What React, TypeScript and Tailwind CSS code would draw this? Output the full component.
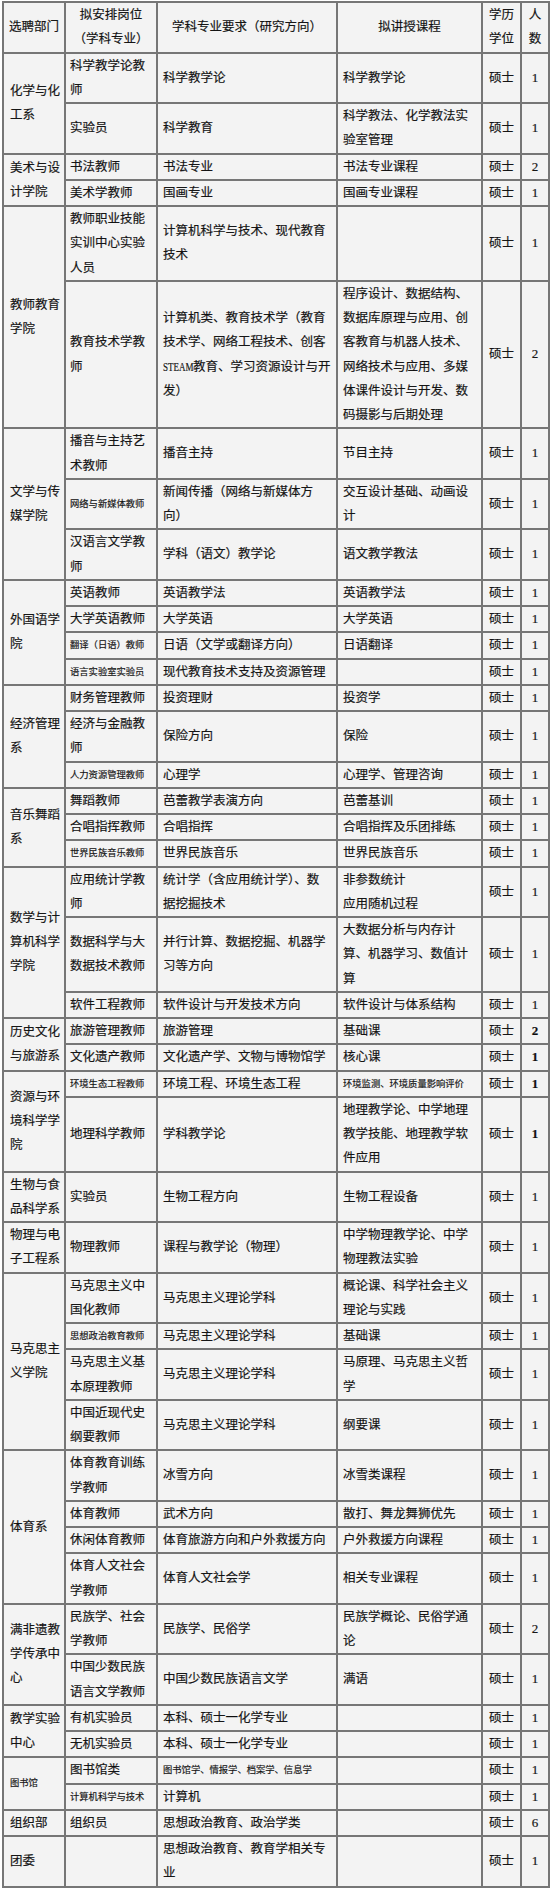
import React from "react";

type Row = {
  pos: string;
  posSm?: boolean;
  major: string;
  majorSm?: boolean;
  course: string;
  courseSm?: boolean;
  n: string;
  bold?: boolean;
};

type Dept = { name: string; nameSm?: boolean; rows: Row[] };

const DEPTS: Dept[] = [
  {
    name: "化学与化\n工系",
    rows: [
      { pos: "科学教学论教\n师", major: "科学教学论", course: "科学教学论", n: "1" },
      { pos: "实验员", major: "科学教育", course: "科学教法、化学教法实\n验室管理", n: "1" },
    ],
  },
  {
    name: "美术与设\n计学院",
    rows: [
      { pos: "书法教师", major: "书法专业", course: "书法专业课程", n: "2" },
      { pos: "美术学教师", major: "国画专业", course: "国画专业课程", n: "1" },
    ],
  },
  {
    name: "教师教育\n学院",
    rows: [
      { pos: "教师职业技能\n实训中心实验\n人员", major: "计算机科学与技术、现代教育\n技术", course: "", n: "1" },
      {
        pos: "教育技术学教\n师",
        major: "计算机类、教育技术学（教育\n技术学、网络工程技术、创客\n@STEAM教育、学习资源设计与开\n发）",
        course: "程序设计、数据结构、\n数据库原理与应用、创\n客教育与机器人技术、\n网络技术与应用、多媒\n体课件设计与开发、数\n码摄影与后期处理",
        n: "2",
      },
    ],
  },
  {
    name: "文学与传\n媒学院",
    rows: [
      { pos: "播音与主持艺\n术教师", major: "播音主持", course: "节目主持", n: "1" },
      { pos: "网络与新媒体教师", posSm: true, major: "新闻传播（网络与新媒体方\n向）", course: "交互设计基础、动画设\n计", n: "1" },
      { pos: "汉语言文学教\n师", major: "学科（语文）教学论", course: "语文教学教法", n: "1" },
    ],
  },
  {
    name: "外国语学\n院",
    rows: [
      { pos: "英语教师", major: "英语教学法", course: "英语教学法", n: "1" },
      { pos: "大学英语教师", major: "大学英语", course: "大学英语", n: "1" },
      { pos: "翻译（日语）教师", posSm: true, major: "日语（文学或翻译方向）", course: "日语翻译", n: "1" },
      { pos: "语言实验室实验员", posSm: true, major: "现代教育技术支持及资源管理", course: "", n: "1" },
    ],
  },
  {
    name: "经济管理\n系",
    rows: [
      { pos: "财务管理教师", major: "投资理财", course: "投资学", n: "1" },
      { pos: "经济与金融教\n师", major: "保险方向", course: "保险", n: "1" },
      { pos: "人力资源管理教师", posSm: true, major: "心理学", course: "心理学、管理咨询", n: "1" },
    ],
  },
  {
    name: "音乐舞蹈\n系",
    rows: [
      { pos: "舞蹈教师", major: "芭蕾教学表演方向", course: "芭蕾基训", n: "1" },
      { pos: "合唱指挥教师", major: "合唱指挥", course: "合唱指挥及乐团排练", n: "1" },
      { pos: "世界民族音乐教师", posSm: true, major: "世界民族音乐", course: "世界民族音乐", n: "1" },
    ],
  },
  {
    name: "数学与计\n算机科学\n学院",
    rows: [
      { pos: "应用统计学教\n师", major: "统计学（含应用统计学）、数\n据挖掘技术", course: "非参数统计\n应用随机过程", n: "1" },
      { pos: "数据科学与大\n数据技术教师", major: "并行计算、数据挖掘、机器学\n习等方向", course: "大数据分析与内存计\n算、机器学习、数值计\n算", n: "1" },
      { pos: "软件工程教师", major: "软件设计与开发技术方向", course: "软件设计与体系结构", n: "1" },
    ],
  },
  {
    name: "历史文化\n与旅游系",
    rows: [
      { pos: "旅游管理教师", major: "旅游管理", course: "基础课", n: "2", bold: true },
      { pos: "文化遗产教师", major: "文化遗产学、文物与博物馆学", course: "核心课", n: "1", bold: true },
    ],
  },
  {
    name: "资源与环\n境科学学\n院",
    rows: [
      { pos: "环境生态工程教师", posSm: true, major: "环境工程、环境生态工程", course: "环境监测、环境质量影响评价", courseSm: true, n: "1", bold: true },
      { pos: "地理科学教师", major: "学科教学论", course: "地理教学论、中学地理\n教学技能、地理教学软\n件应用", n: "1", bold: true },
    ],
  },
  {
    name: "生物与食\n品科学系",
    rows: [{ pos: "实验员", major: "生物工程方向", course: "生物工程设备", n: "1" }],
  },
  {
    name: "物理与电\n子工程系",
    rows: [{ pos: "物理教师", major: "课程与教学论（物理）", course: "中学物理教学论、中学\n物理教法实验", n: "1" }],
  },
  {
    name: "马克思主\n义学院",
    rows: [
      { pos: "马克思主义中\n国化教师", major: "马克思主义理论学科", course: "概论课、科学社会主义\n理论与实践", n: "1" },
      { pos: "思想政治教育教师", posSm: true, major: "马克思主义理论学科", course: "基础课", n: "1" },
      { pos: "马克思主义基\n本原理教师", major: "马克思主义理论学科", course: "马原理、马克思主义哲\n学", n: "1" },
      { pos: "中国近现代史\n纲要教师", major: "马克思主义理论学科", course: "纲要课", n: "1" },
    ],
  },
  {
    name: "体育系",
    rows: [
      { pos: "体育教育训练\n学教师", major: "冰雪方向", course: "冰雪类课程", n: "1" },
      { pos: "体育教师", major: "武术方向", course: "散打、舞龙舞狮优先", n: "1" },
      { pos: "休闲体育教师", major: "体育旅游方向和户外救援方向", course: "户外救援方向课程", n: "1" },
      { pos: "体育人文社会\n学教师", major: "体育人文社会学", course: "相关专业课程", n: "1" },
    ],
  },
  {
    name: "满非遗教\n学传承中\n心",
    rows: [
      { pos: "民族学、社会\n学教师", major: "民族学、民俗学", course: "民族学概论、民俗学通\n论", n: "2" },
      { pos: "中国少数民族\n语言文学教师", major: "中国少数民族语言文学", course: "满语", n: "1" },
    ],
  },
  {
    name: "教学实验\n中心",
    rows: [
      { pos: "有机实验员", major: "本科、硕士一化学专业", course: "", n: "1" },
      { pos: "无机实验员", major: "本科、硕士一化学专业", course: "", n: "1" },
    ],
  },
  {
    name: "图书馆",
    nameSm: true,
    rows: [
      { pos: "图书馆类", major: "图书馆学、情报学、档案学、信息学", majorSm: true, course: "", n: "1" },
      { pos: "计算机科学与技术", posSm: true, major: "计算机", course: "", n: "1" },
    ],
  },
  {
    name: "组织部",
    rows: [{ pos: "组织员", major: "思想政治教育、政治学类", course: "", n: "6" }],
  },
  {
    name: "团委",
    rows: [{ pos: "", major: "思想政治教育、教育学相关专\n业", course: "", n: "1" }],
  },
];

// a line starting with "@STEAM" gets the narrow Latin word the scan shows
function Lines({ text }: { text: string }) {
  const parts = text.split("\n");
  return (
    <>
      {parts.map((p, i) => (
        <React.Fragment key={i}>
          {i > 0 && <br />}
          {p.startsWith("@STEAM") ? (
            <>
              <span className="inline-block w-[30px] overflow-visible align-top">
                <span className="inline-block origin-left scale-x-[0.72]">STEAM</span>
              </span>
              {p.slice(6)}
            </>
          ) : (
            p
          )}
        </React.Fragment>
      ))}
    </>
  );
}

const cell = "border-2 border-[#767676] align-middle whitespace-nowrap leading-[24.25px] p-0";
const big = "text-[12.5px]";
const small = "text-[9.3px]";

export default function App() {
  return (
    <div className="w-[550px] min-h-[1891px] bg-white pt-[1px] pl-[2px] text-[#0d0d0d] [-webkit-text-stroke:0.2px_#333] font-['Liberation_Serif','Noto_Sans_CJK_SC',serif]">
      <table className="w-[546px] table-fixed border-collapse bg-[#f3f3f3]">
        <colgroup>
          <col className="w-[62px]" />
          <col className="w-[92px]" />
          <col className="w-[180px]" />
          <col className="w-[145px]" />
          <col className="w-[39px]" />
          <col className="w-[28px]" />
        </colgroup>
        <thead>
          <tr>
            <th className={`${cell} ${big} font-normal text-center`}>选聘部门</th>
            <th className={`${cell} ${big} font-normal text-center`}>
              拟安排岗位
              <br />
              （学科专业）
            </th>
            <th className={`${cell} ${big} font-normal text-center`}>学科专业要求（研究方向）</th>
            <th className={`${cell} ${big} font-normal text-center`}>拟讲授课程</th>
            <th className={`${cell} ${big} font-normal text-center`}>
              学历
              <br />
              学位
            </th>
            <th className={`${cell} ${big} font-normal text-center`}>
              人
              <br />
              数
            </th>
          </tr>
        </thead>
        <tbody>
          {DEPTS.map((d) =>
            d.rows.map((r, i) => (
              <tr key={d.name + i}>
                {i === 0 && (
                  <td rowSpan={d.rows.length} className={`${cell} ${d.nameSm ? small : big} pl-[6px]`}>
                    <Lines text={d.name} />
                  </td>
                )}
                <td className={`${cell} ${r.posSm ? small : big} pl-[4px]`}>
                  <Lines text={r.pos} />
                </td>
                <td className={`${cell} ${r.majorSm ? small : big} pl-[5px]`}>
                  <Lines text={r.major} />
                </td>
                <td className={`${cell} ${r.courseSm ? small : big} pl-[5px]`}>
                  <Lines text={r.course} />
                </td>
                <td className={`${cell} ${big} text-center`}>硕士</td>
                <td className={`${cell} text-[13px] text-center ${r.bold ? "font-bold" : ""}`}>{r.n}</td>
              </tr>
            ))
          )}
        </tbody>
      </table>
    </div>
  );
}
